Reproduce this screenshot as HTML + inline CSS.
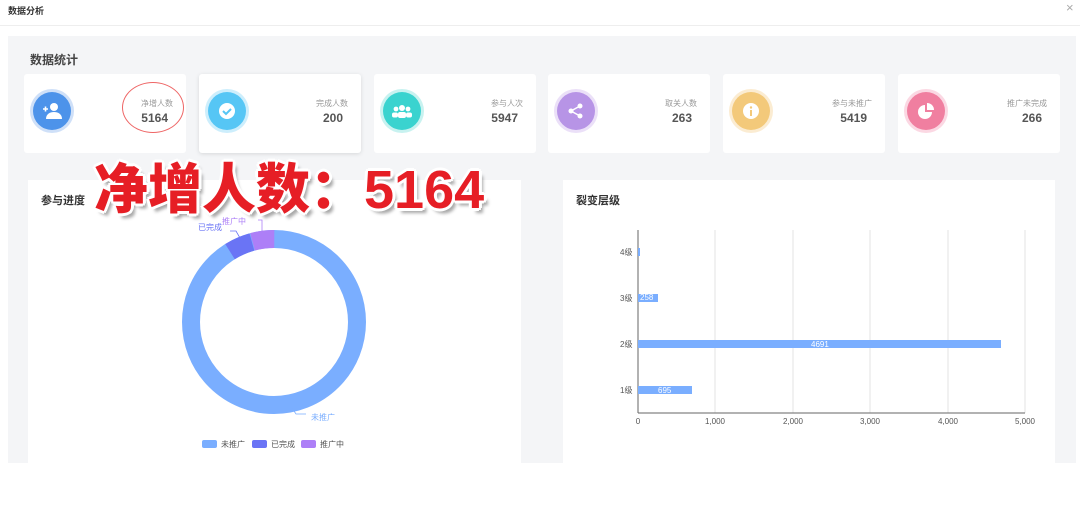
<!DOCTYPE html>
<html><head><meta charset="utf-8"><style>
*{margin:0;padding:0;box-sizing:border-box}
body{width:1080px;height:510px;background:#fff;font-family:"Liberation Sans","Noto Sans CJK SC",sans-serif;position:relative;overflow:hidden;color:#333}
.abs{position:absolute}
.card{position:absolute;top:74px;width:162px;height:79px;background:#fff;border-radius:3px}
.ic{position:absolute;left:9px;top:18px;width:38px;height:38px;border-radius:50%}
.lab{position:absolute;right:13px;top:24px;font-size:8px;color:#999}
.val{position:absolute;right:18px;top:37px;font-size:12px;font-weight:bold;color:#555}
.panel{position:absolute;top:180px;height:283px;background:#fff}
.big{position:absolute;left:94px;top:145px;font-size:54px;font-weight:900;color:#e61e25;letter-spacing:0;
text-shadow:2px 2px 0 #fff,-2px -2px 0 #fff,2px -2px 0 #fff,-2px 2px 0 #fff,0 3px 0 #fff,3px 0 0 #fff,-3px 0 0 #fff,0 -3px 0 #fff,4px 5px 3px rgba(0,0,0,.35);white-space:nowrap}
</style></head><body>
<div class="abs" style="left:8px;top:4px;font-size:9px;font-weight:bold;color:#333">数据分析</div>
<div class="abs" style="left:1066px;top:0px;font-size:13px;color:#aaa">×</div>
<div class="abs" style="left:0;top:25px;width:1080px;height:1px;background:#eee"></div>
<div class="abs" style="left:8px;top:36px;width:1068px;height:427px;background:#f4f5f7"></div>
<div class="abs" style="left:30px;top:51px;font-size:12px;font-weight:bold;color:#444">数据统计</div>

<div class="card" style="left:24px"><div class="ic" style="background:#4d93ea;box-shadow:0 0 0 3px #cfe0f8"></div>
<svg class="abs" style="left:18px;top:28px" width="20" height="18" viewBox="0 0 20 18"><circle cx="12" cy="5" r="4" fill="#fff"/><path d="M4 17c0-5 4-7 8-7s8 2 8 7z" fill="#fff"/><path d="M1 7h5M3.5 4.5v5" stroke="#fff" stroke-width="1.6"/></svg>
<div class="lab">净增人数</div><div class="val">5164</div>
<div class="abs" style="left:98px;top:8px;width:62px;height:51px;border:1px solid #e66;border-radius:50%"></div></div>
<div class="card" style="left:199px;box-shadow:0 1px 4px rgba(0,0,0,.12)"><div class="ic" style="background:#56c6f5;box-shadow:0 0 0 3px #cdeefc"></div>
<svg class="abs" style="left:20px;top:29px" width="16" height="16"><circle cx="8" cy="8" r="8" fill="#fff"/><path d="M4 8l3 3 5-5" stroke="#56c6f5" stroke-width="2" fill="none"/></svg>
<div class="lab">完成人数</div><div class="val">200</div></div>
<div class="card" style="left:374px"><div class="ic" style="background:#3ad3cf;box-shadow:0 0 0 3px #c8f2f0"></div>
<svg class="abs" style="left:18px;top:30px" width="20" height="14"><circle cx="10" cy="4" r="3" fill="#fff"/><circle cx="4" cy="5" r="2.4" fill="#fff"/><circle cx="16" cy="5" r="2.4" fill="#fff"/><rect x="6" y="8" width="8" height="6" rx="2" fill="#fff"/><rect x="0" y="8.5" width="6" height="5" rx="2" fill="#fff"/><rect x="14" y="8.5" width="6" height="5" rx="2" fill="#fff"/></svg>
<div class="lab">参与人次</div><div class="val">5947</div></div>
<div class="card" style="left:548px"><div class="ic" style="background:#b794e6;box-shadow:0 0 0 3px #ebe0f8"></div>
<svg class="abs" style="left:20px;top:29px" width="16" height="16"><circle cx="12" cy="3" r="2.5" fill="#fff"/><circle cx="3" cy="8" r="2.5" fill="#fff"/><circle cx="12" cy="13" r="2.5" fill="#fff"/><path d="M12 3L3 8l9 5" stroke="#fff" stroke-width="1.5" fill="none"/></svg>
<div class="lab">取关人数</div><div class="val">263</div></div>
<div class="card" style="left:723px"><div class="ic" style="background:#f3c97a;box-shadow:0 0 0 3px #fbecd2"></div>
<svg class="abs" style="left:20px;top:29px" width="16" height="16"><circle cx="8" cy="8" r="8" fill="#fff"/><circle cx="8" cy="4.5" r="1.2" fill="#f3c97a"/><rect x="7" y="7" width="2" height="6" fill="#f3c97a"/></svg>
<div class="lab">参与未推广</div><div class="val">5419</div></div>
<div class="card" style="left:898px"><div class="ic" style="background:#f07fa0;box-shadow:0 0 0 3px #fbd8e3"></div>
<svg class="abs" style="left:20px;top:29px" width="16" height="16"><path d="M7 2a7 7 0 1 0 7 7H7z" fill="#fff"/><path d="M9 0v7h7a7 7 0 0 0-7-7z" fill="#fff"/></svg>
<div class="lab">推广未完成</div><div class="val">266</div></div>

<div class="panel" style="left:28px;width:493px">
<div class="abs" style="left:13px;top:12px;font-size:11px;font-weight:bold;color:#333">参与进度</div>
<svg class="abs" style="left:0;top:0" width="493" height="283">
<g transform="translate(246,142)">
<circle r="83" fill="none" stroke="#7aaeff" stroke-width="18"/>
<circle r="83" fill="none" stroke="#6a74f5" stroke-width="18" stroke-dasharray="24 600" transform="rotate(-122)"/>
<circle r="83" fill="none" stroke="#ad7ff7" stroke-width="18" stroke-dasharray="22 600" transform="rotate(-105)"/>
</g>
<path d="M264 228l4 6h10" stroke="#7aaeff" fill="none" stroke-width=".8"/>
<text x="283" y="240" font-size="8" fill="#7aaeff">未推广</text>
<path d="M212 58l-4-7h-6" stroke="#6a74f5" fill="none" stroke-width=".8"/>
<text x="170" y="50" font-size="8" fill="#6a74f5">已完成</text>
<path d="M234 52v-12h-4" stroke="#ad7ff7" fill="none" stroke-width=".8"/>
<text x="194" y="44" font-size="8" fill="#ad7ff7">推广中</text>
<rect x="174" y="260" width="15" height="8" rx="2" fill="#7aaeff"/><text x="193" y="267" font-size="8" fill="#555">未推广</text>
<rect x="224" y="260" width="15" height="8" rx="2" fill="#6a74f5"/><text x="243" y="267" font-size="8" fill="#555">已完成</text>
<rect x="273" y="260" width="15" height="8" rx="2" fill="#ad7ff7"/><text x="292" y="267" font-size="8" fill="#555">推广中</text>
</svg></div>

<div class="panel" style="left:563px;width:492px">
<div class="abs" style="left:13px;top:12px;font-size:11px;font-weight:bold;color:#333">裂变层级</div>
<svg class="abs" style="left:0;top:0" width="492" height="283" font-size="8" fill="#555">
<g stroke="#e3e3e3"><line x1="152" y1="50" x2="152" y2="233"/><line x1="230" y1="50" x2="230" y2="233"/><line x1="307" y1="50" x2="307" y2="233"/><line x1="385" y1="50" x2="385" y2="233"/><line x1="462" y1="50" x2="462" y2="233"/></g>
<line x1="75" y1="50" x2="75" y2="233" stroke="#666"/><line x1="75" y1="233" x2="462" y2="233" stroke="#666"/>
<rect x="75" y="68" width="2" height="8" fill="#7aaeff"/>
<rect x="75" y="114" width="20" height="8" fill="#7aaeff"/>
<rect x="75" y="160" width="363" height="8" fill="#7aaeff"/>
<rect x="75" y="206" width="54" height="8" fill="#7aaeff"/>
<text x="77" y="120" fill="#fff">258</text><text x="248" y="167" fill="#fff">4691</text><text x="95" y="213" fill="#fff">695</text>
<text x="57" y="75">4级</text><text x="57" y="121">3级</text><text x="57" y="167">2级</text><text x="57" y="213">1级</text>
<g text-anchor="middle"><text x="75" y="244">0</text><text x="152" y="244">1,000</text><text x="230" y="244">2,000</text><text x="307" y="244">3,000</text><text x="385" y="244">4,000</text><text x="462" y="244">5,000</text></g>
</svg></div>

<div class="big">净增人数：5164</div>
</body></html>
